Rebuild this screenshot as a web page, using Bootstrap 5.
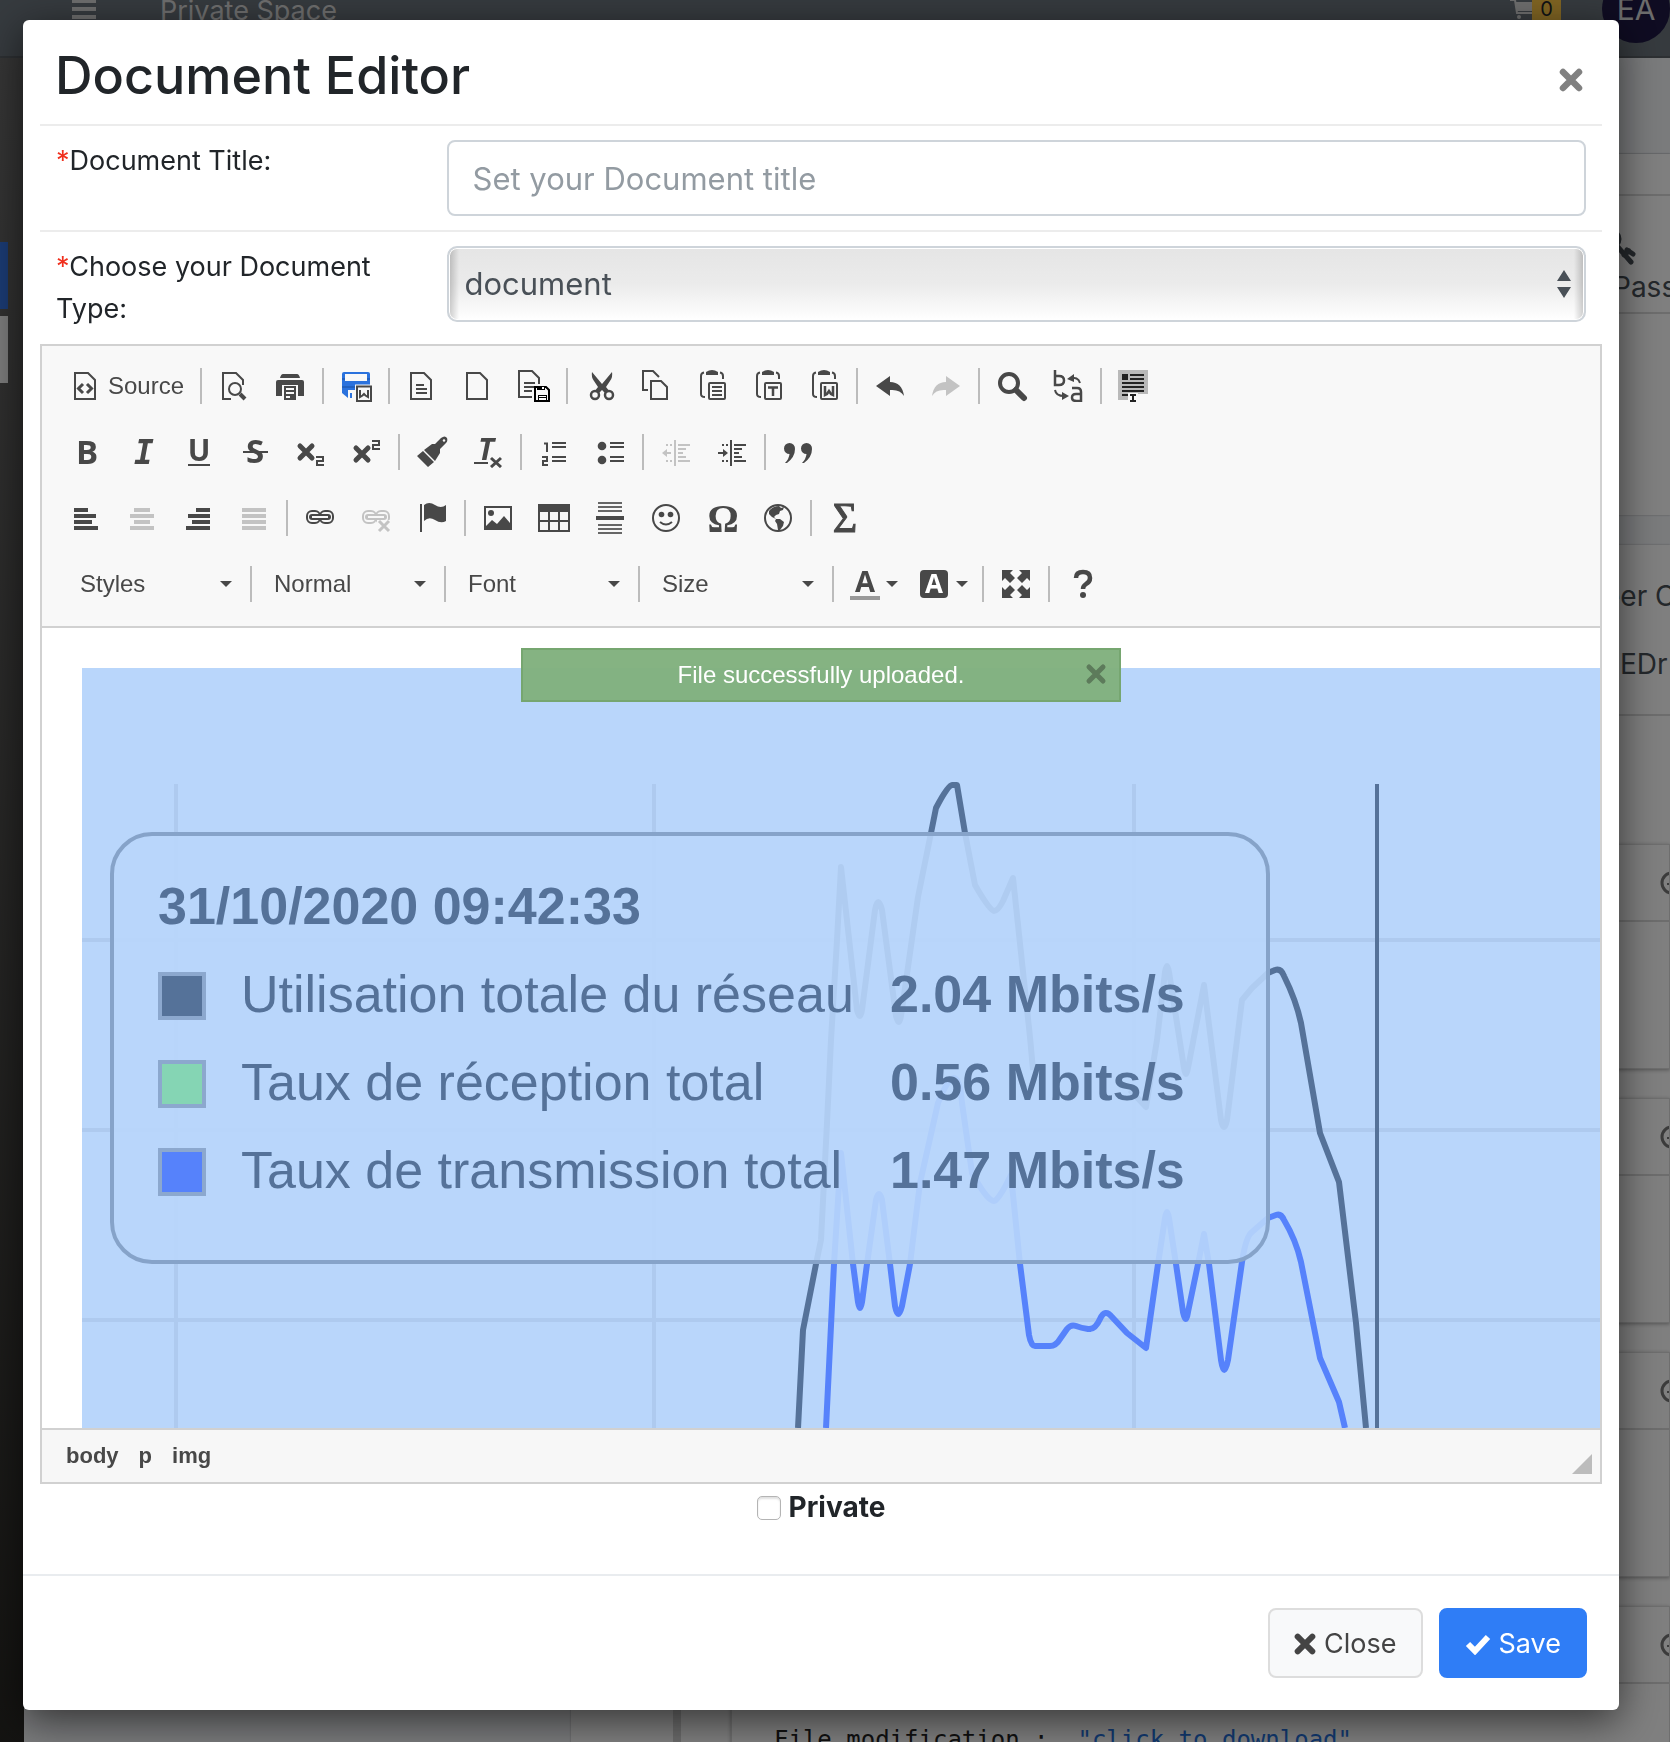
<!DOCTYPE html>
<html lang="en">
<head>
<meta charset="utf-8">
<meta name="viewport" content="width=device-width, initial-scale=1">
<title>Document Editor</title>
<link href="https://cdn.jsdelivr.net/npm/bootstrap@5.3.0/dist/css/bootstrap.min.css" rel="stylesheet">
<script src="https://cdn.jsdelivr.net/npm/bootstrap@5.3.0/dist/js/bootstrap.bundle.min.js"></script>
<style>
  body { font-family: Inter, "Noto Sans", sans-serif; font-size: 27px; line-height: 42px; color: #212529; height: 100vh; overflow: hidden; background: #f4f6f9; }

  /* page behind the dialog */
  .page-behind { height: 100vh; overflow: hidden; }
  .top-nav { height: 96px; margin-top: -38px; background: #6c757d; border-bottom: 2px solid #5a6066; color: #dcdcdc; }
  .top-nav .menu-btn { margin-left: 72px; margin-right: 64px; color: #dcdcdc; }
  .cart-count { background: #ffc845; color: #212529; font-size: 20px; line-height: 30px; width: 29px; height: 30px; }
  .avatar { width: 68px; height: 68px; background: #1e1844; font-size: 30px; margin-left: 41px; color: #d8d8d8; }
  .side-strip { width: 24px; background: linear-gradient(#6c6c6c, #282723); padding-top: 184px; }
  .side-strip i { display: block; width: 8px; height: 67px; margin-bottom: 7px; background: #3677e8; }
  .side-strip i + i { background: #f8f8f8; }
  .page-head { height: 96px; border-bottom: 1px solid #e4e7ea; }
  .bg-panel { background: #fff; box-shadow: 0 0 2px rgba(0,0,0,.3); }
  .panel-a { height: 361px; margin-bottom: 30px; }
  .panel-a .tab-top { height: 42px; border-bottom: 2px solid #dadada; }
  .panel-a .tab-key { height: 118px; border-bottom: 2px solid #dadada; padding-top: 36px; }
  .edge-text { width: 57px; white-space: nowrap; overflow: hidden; color: #495057; font-size: 28px; }
  .panel-b { margin-left: 547px; height: 1204px; }
  .panel-b .panel-head { height: 171px; border-bottom: 2px solid #dadada; padding-top: 30px; }
  .panel-b .panel-head .edge-text { width: 66px; line-height: 42px; margin-bottom: 26px; }
  .panel-b .panel-head .edge-text + .edge-text { width: 50px; }
  .track { width: 8px; margin: 0 50px 0 102px; background: #d6d6d6; }
  .entry { border: 1px solid #dcdcdc; background: #fff; box-shadow: 0 1px 4px rgba(0,0,0,.35); height: 225px; margin-bottom: 29px; }
  .entry-head { height: 77px; border-bottom: 2px solid #dadada; color: #777; }
  .entry-head svg { width: 24px; height: 24px; margin-right: -15px; }
  .entries { padding-top: 128px; }
  .entry-body { font: 24px/36px "DejaVu Sans Mono", monospace; color: #222; padding: 38px 42px 0; white-space: pre; }
  .entry-body a { color: #2472e0; text-decoration: none; }

  /* dialog */
  .modal-dialog.editor-dialog { max-width: none; margin: 20px 51px 32px 23px; }
  .editor-dialog .modal-content { border: 0; border-radius: 6px; box-shadow: 0 10px 40px rgba(0,0,0,.6); }
  .editor-dialog .modal-header { height: 104px; padding: 8px 32px 0; border: 0; }
  .editor-dialog .modal-title { font-size: 52px; line-height: 80px; font-weight: 500; }
  .editor-dialog .modal-body { padding: 0 17px; }
  .editor-dialog .modal-footer { padding: 32px; gap: 16px; border-top: 2px solid #e9ecef; }
  .editor-dialog .modal-footer > * { margin: 0; }
  .plain-btn { border: 0; background: none; padding: 0; color: inherit; display: inline-flex; align-items: center; justify-content: center; }
  .dismiss { color: #808080; }
  .form-line { --bs-gutter-x: 32px; border-top: 2px solid #ececec; padding: 14px 0; margin: 0; }
  .req { color: #f0301e; }
  .field { height: 76px; border: 2px solid #ced4da; border-radius: 8px; font-size: 31px; color: #495057; }
  .form-control.field { padding: 0 24px; }
  .form-control.field::placeholder { color: #939ba2; }
  .form-select.field { padding: 0 60px 0 16px; border-radius: 10px; box-shadow: inset 0 0 0 1px #fff;
    background: url("data:image/svg+xml,%3Csvg xmlns='http://www.w3.org/2000/svg' viewBox='0 0 14 28'%3E%3Cpath d='M7 0l7 11H0zM7 28l7-11H0z' fill='%23495057'/%3E%3C/svg%3E") right 13px center / 14px 28px no-repeat,
      linear-gradient(90deg, #0003, #0000 10px, #0000 calc(100% - 10px), #0003), linear-gradient(#e5e5e5, #ebebeb 50%, #fff); }

  /* rich text editor */
  .rte { border: 2px solid #d1d1d1; font-family: "Liberation Sans", Arial, sans-serif; color: #484848; }
  .rte-tools { background: #f8f8f8; border-bottom: 2px solid #d1d1d1; padding: 7px 16px 9px; }
  .rte-row { min-height: 66px; }
  .tool { width: 56px; height: 48px; }
  .tool svg, .tool-color svg.ico { width: 32px; height: 32px; flex: none; }
  .tool:disabled { color: #c3c3c3; }
  .tool-source { width: 138px; height: 48px; gap: 6px; font-size: 24px; line-height: 32px; }
  .tool-source svg { width: 32px; height: 32px; }
  .tool-color { width: 70px; height: 48px; gap: 4px; padding-left: 2px; }
  .split { width: 2px; height: 36px; margin: 0 4px; background: #bcbcbc; }
  .combo { appearance: none; border: 0; width: 184px; height: 48px; padding: 0 40px 0 18px; font-size: 24px; color: #484848;
    background: url("data:image/svg+xml,%3Csvg xmlns='http://www.w3.org/2000/svg' viewBox='0 0 12 6'%3E%3Cpath d='M0 0h12L6 6z' fill='%23484848'/%3E%3C/svg%3E") right 14px center / 12px 6px no-repeat; }
  .rte-page { height: 800px; padding: 40px 0 0 40px; overflow: hidden; background: #fff; }
  .rte-page > svg { display: block; width: 1600px; height: 760px; max-width: none; }
  .notice { top: 20px; left: 50%; transform: translateX(-50%); width: 600px; height: 54px; background: rgba(129,177,126,.97); border: 2px solid #76a670; color: #fff; font-size: 24px; line-height: 32px; }
  .notice button { right: 12px; top: 13px; color: #5d7b5b; }
  .rte-foot { height: 54px; background: #f7f7f7; border-top: 2px solid #d1d1d1; padding: 0 8px 0 24px; font-size: 22px; line-height: 44px; font-weight: 700; }
  .rte-foot a { color: #484848; text-decoration: none; margin-right: 20px; }

  .private-line { padding: 2px 0 46px; font-size: 28px; font-weight: 700; }
  .private-line .form-check-input { width: 24px; height: 24px; margin: 2px 0 0; border: 1px solid #b4b4b4; border-radius: 5px; box-shadow: inset 0 2px 2px rgba(0,0,0,.12); }
  .act { height: 70px; border-radius: 8px; font-size: 27px; line-height: 42px; padding: 2px 24px 0; border-width: 2px; gap: 8px; }
  .act-close { background: #f8f9fa; border-color: #ddd; color: #444; }
  .act-save { background: #2f7df6; border-color: #2f7df6; color: #fff; }
</style>
</head>
<body>

<svg width="0" height="0" class="position-absolute" aria-hidden="true">
  <defs>
    <symbol id="doc" viewBox="0 0 32 32"><path d="M5 3h13l7 7v19H5z" fill="none" stroke="currentColor" stroke-width="2"/></symbol>
    <symbol id="clip" viewBox="0 0 32 32"><g fill="none" stroke="currentColor" stroke-width="2"><path d="M8 2.500Q5 3 5 6V24Q5 27 9 27M24 2.500Q27 3 27 6V9"/><rect x="13" y="13" width="16" height="16" rx="1"/></g><path d="M10 2Q13 0 16 0T22 2V5H10z" fill="currentColor"/></symbol>
    <symbol id="back" viewBox="0 0 32 32"><path d="M2 16 16 6v6q12 0 14 14-4-7-14-6v6z" fill="currentColor"/></symbol>
    <symbol id="chain" viewBox="0 0 32 32"><g fill="none" stroke="currentColor" stroke-width="2"><rect x="3" y="9" width="13" height="12" rx="5"/><rect x="16" y="9" width="13" height="12" rx="5"/><path d="M8 15h16" stroke-width="6" stroke-linecap="round"/></g><path d="M8 15h16" stroke="#f8f8f8" stroke-width="2"/></symbol>
    <symbol id="clock" viewBox="0 0 24 24"><circle cx="12" cy="12" r="10" fill="none" stroke="currentColor" stroke-width="3"/><path d="M12 6v7H7" fill="none" stroke="currentColor" stroke-width="2"/></symbol>
    <symbol id="times" viewBox="0 0 24 24"><path d="M4 4 20 20M20 4 4 20" stroke="currentColor" stroke-width="6.500" stroke-linecap="round"/></symbol>
    <symbol id="caret" viewBox="0 0 12 6"><path d="M0 0h12L6 6z" fill="currentColor"/></symbol>
  </defs>
</svg>

<div class="page-behind">
  <nav class="top-nav d-flex align-items-center">
    <button class="plain-btn menu-btn" aria-label="Menu"><svg width="24" height="20"><path d="M0 2h24M0 10h24M0 18h24" stroke="currentColor" stroke-width="4"/></svg></button>
    <span class="pt-1">Private Space</span>
    <span class="ms-auto d-flex align-items-center">
      <svg width="22" height="22" viewBox="0 0 22 22"><path d="M0 2h5l2 13h15" fill="none" stroke="currentColor" stroke-width="2"/><path d="M5 4h17v9H7z" fill="currentColor"/><circle cx="9" cy="19" r="2" fill="currentColor"/></svg>
      <span class="cart-count rounded-1 text-center">0</span>
    </span>
    <span class="avatar rounded-circle d-flex align-items-center justify-content-center">EA</span>
  </nav>
  <div class="d-flex">
    <aside class="side-strip"><i></i><i></i></aside>
    <main class="flex-grow-1">
      <div class="page-head"></div>
      <section class="bg-panel panel-a">
        <div class="tab-top"></div>
        <div class="tab-key">
          <div class="edge-text ms-auto">
            <svg class="d-block" width="30" height="34" viewBox="1613 231 30 34"><g fill="none" stroke="currentColor" stroke-width="5" stroke-linecap="round"><circle cx="1611" cy="238" r="8"/><path d="M1617 245 1631 261M1627 249l6 4M1624 254l5-4"/></g></svg>
            Pass
          </div>
        </div>
      </section>
      <section class="bg-panel panel-b">
        <div class="panel-head"><div class="edge-text ms-auto">eer C</div><div class="edge-text ms-auto">EDr</div></div>
        <div class="d-flex">
          <div class="track"></div>
          <div class="entries flex-grow-1">
            <div class="entry"><div class="entry-head d-flex justify-content-end align-items-center overflow-hidden"><svg><use href="#clock"/></svg></div></div>
            <div class="entry"><div class="entry-head d-flex justify-content-end align-items-center overflow-hidden"><svg><use href="#clock"/></svg></div></div>
            <div class="entry"><div class="entry-head d-flex justify-content-end align-items-center overflow-hidden"><svg><use href="#clock"/></svg></div></div>
            <div class="entry"><div class="entry-head d-flex justify-content-end align-items-center overflow-hidden"><svg><use href="#clock"/></svg></div><div class="entry-body">File modification :  <a href="#">"click to download"</a></div></div>
          </div>
        </div>
      </section>
    </main>
  </div>
</div>

<div class="modal-backdrop show"></div>
<div class="modal d-block" role="dialog" aria-labelledby="dlg-title">
  <div class="modal-dialog editor-dialog">
    <div class="modal-content">
      <div class="modal-header d-flex justify-content-between align-items-center">
        <h1 class="modal-title" id="dlg-title">Document Editor</h1>
        <button class="plain-btn dismiss mt-2" aria-label="Close dialog"><svg width="32" height="32" viewBox="-4 -4 32 32"><use href="#times" width="24" height="24"/></svg></button>
      </div>

      <div class="modal-body">
        <div class="row form-line">
          <label class="col-3" for="doc-title"><span class="req">*</span>Document Title:</label>
          <div class="col-9"><input id="doc-title" class="form-control field" type="text" placeholder="Set your Document title"></div>
        </div>
        <div class="row form-line">
          <label class="col-3" for="doc-type"><span class="req">*</span>Choose your Document Type:</label>
          <div class="col-9"><select id="doc-type" class="form-select field"><option>document</option></select></div>
        </div>

        <div class="rte">
          <div class="rte-tools">
            <div class="rte-row d-flex flex-wrap align-items-center">
              <button class="plain-btn tool-source"><svg viewBox="0 0 32 32"><use href="#doc"/><path d="M13 14l-4.500 4.500L13 23M17 14l4.500 4.500L17 23" fill="none" stroke="currentColor" stroke-width="3"/></svg>Source</button>
              <span class="split"></span>
              <button class="plain-btn tool" aria-label="Preview"><svg viewBox="0 0 32 32" fill="none" stroke="currentColor"><path d="M13 29H5V3h13l7 7v5" stroke-width="2"/><circle cx="17" cy="19" r="6" stroke-width="2"/><path d="m22 24 5 5" stroke-width="4"/></svg></button>
              <button class="plain-btn tool" aria-label="Print"><svg viewBox="0 0 32 32"><path d="M6 8q1-4 3-4h14q2 0 3 4zM4 10h24q2 0 2 2v14h-6V15H8v11H2V12q0-2 2-2zM10 16h12v14H10z" fill="currentColor"/><path d="M12 19h8M12 23h8M12 27h4" stroke="#f8f8f8" stroke-width="2"/></svg></button>
              <span class="split"></span>
              <button class="plain-btn tool" aria-label="Export to Word"><svg viewBox="0 0 32 32"><path d="M4 2h24q2 0 2 2v24H8l-6-5V4q0-2 2-2z" fill="#2b72dd"/><path d="M5 4h22v7H5zM8 20h7v8h-3v-5h-2v5H8z" fill="#f8f8f8"/><path d="M2 9h3M27 9h3M2 17h28" stroke="#1b4f9f"/><rect x="15" y="14.500" width="17" height="17.500" fill="#f8f8f8"/><path d="M17 16.500h14V31H17zM20 20v7l2.500-1.500L24 24l1.500 1.500L28 27v-7" fill="none" stroke="currentColor" stroke-width="2"/></svg></button>
              <span class="split"></span>
              <button class="plain-btn tool" aria-label="Templates"><svg viewBox="0 0 32 32"><use href="#doc"/><path d="M10 15h8M10 19h11M10 23h11" stroke="currentColor" stroke-width="2"/></svg></button>
              <button class="plain-btn tool" aria-label="New page"><svg viewBox="0 0 32 32"><use href="#doc"/></svg></button>
              <button class="plain-btn tool" aria-label="Save document"><svg viewBox="0 0 32 32"><path d="M14 27H1V1h13l7 7v6M6 13h11M6 17h10M6 21h8" fill="none" stroke="currentColor" stroke-width="2"/><path d="M17 17h11l3 3v11H17z" fill="#f8f8f8" stroke="#000" stroke-width="2"/><path d="M19 16h8v4h-8zM20 25h9v6h-9z"/><path d="M24 17h2v2h-2zM21 26h7v1h-7zM21 28h7v2h-7z" fill="#fff"/></svg></button>
              <span class="split"></span>
              <button class="plain-btn tool" aria-label="Cut"><svg viewBox="0 0 32 32"><path d="M8 2q-1 5 2 9l4 6-4 5 3 3 5-5 5 5 3-3-4-5 4-6q3-4 2-9l-10 12z" fill="currentColor"/><g fill="#f8f8f8" stroke="currentColor" stroke-width="2.500"><circle cx="11" cy="25" r="4"/><circle cx="25" cy="25" r="4"/></g></svg></button>
              <button class="plain-btn tool" aria-label="Copy"><svg viewBox="0 0 32 32" fill="none" stroke="currentColor" stroke-width="2"><path d="M8 20H3V1h10l6 6M11 11h10l6 6v12H11z"/></svg></button>
              <button class="plain-btn tool" aria-label="Paste"><svg viewBox="0 0 32 32"><use href="#clip"/><path d="M16 17h10M16 21h10M16 25h10" stroke="currentColor" stroke-width="2"/></svg></button>
              <button class="plain-btn tool" aria-label="Paste as plain text"><svg viewBox="0 0 32 32"><use href="#clip"/><path d="M16 17.500h10M21 17v9" stroke="currentColor" stroke-width="2.500"/></svg></button>
              <button class="plain-btn tool" aria-label="Paste from Word"><svg viewBox="0 0 32 32"><use href="#clip"/><path d="M17 16v9l2-1 2-3 2 3 2 1v-9" fill="none" stroke="currentColor" stroke-width="2.500"/></svg></button>
              <span class="split"></span>
              <button class="plain-btn tool" aria-label="Undo"><svg><use href="#back"/></svg></button>
              <button class="plain-btn tool" aria-label="Redo" disabled><svg viewBox="0 0 32 32"><g transform="matrix(-1 0 0 1 32 0)"><use href="#back" width="32" height="32"/></g></svg></button>
              <span class="split"></span>
              <button class="plain-btn tool" aria-label="Find"><svg viewBox="0 0 32 32" fill="none" stroke="currentColor"><circle cx="13" cy="13" r="9" stroke-width="4"/><path d="m20 20 8 8" stroke-width="6" stroke-linecap="round"/></svg></button>
              <button class="plain-btn tool" aria-label="Replace"><svg viewBox="0 0 32 32" fill="none" stroke="currentColor"><path d="M3 0v15h4q5 0 5-4.500T7 6H3M20 18h5q4 0 4 4v9h-4.500q-4.500 0-4.500-3.500T24 24h5" stroke-width="2.500"/><path d="M18 9q8-3 10 4M3 20q1 6 9 6" stroke-width="2"/><path d="m15 9 7-5v8zM17 26l-7-4v8z" fill="currentColor" stroke="none"/></svg></button>
              <span class="split"></span>
              <button class="plain-btn tool" aria-label="Select all"><svg viewBox="0 0 32 32"><path d="M0 0h30v24H20v-1h-9v7H0z" fill="#b9b9b9"/><path d="M4 4h6v6H4z" fill="#222"/><path d="M12 5h14M12 9h14M4 13h22M4 17h22M4 21h22M4 25h6" stroke="#222" stroke-width="2"/><path d="M10 23h10v9H10z" fill="#f8f8f8"/><path d="M12 25h6M12 31h6M15 25v6" stroke="#222" stroke-width="2"/></svg></button>
            </div>

            <div class="rte-row d-flex flex-wrap align-items-center">
              <button class="plain-btn tool" aria-label="Bold"><svg viewBox="0 0 32 32" fill="currentColor"><text x="17" y="28" text-anchor="middle" font-family="Open Sans" font-weight="700" font-size="33">B</text></svg></button>
              <button class="plain-btn tool" aria-label="Italic"><svg viewBox="0 0 32 32" fill="currentColor"><text x="18" y="28" text-anchor="middle" font-family="DejaVu Sans Mono" font-style="italic" font-weight="700" font-size="33">I</text></svg></button>
              <button class="plain-btn tool" aria-label="Underline"><svg viewBox="0 0 32 32" fill="currentColor"><text x="17" y="25" text-anchor="middle" font-family="Open Sans" font-weight="700" font-size="30">U</text><path d="M6 28h22v2H6z"/></svg></button>
              <button class="plain-btn tool" aria-label="Strikethrough"><svg viewBox="0 0 32 32" fill="currentColor"><text x="17" y="27" text-anchor="middle" font-family="Open Sans" font-weight="700" font-size="33">S</text><path d="M5 15h25v2H5z"/></svg></button>
              <button class="plain-btn tool" aria-label="Subscript"><svg viewBox="0 0 32 32" fill="currentColor"><path d="m6 10 12 12M18 10 6 22" stroke="currentColor" stroke-width="5" stroke-linecap="round"/><path d="M22 21h7v4h-6v4h7" fill="none" stroke="currentColor" stroke-width="2"/></svg></button>
              <button class="plain-btn tool" aria-label="Superscript"><svg viewBox="0 0 32 32"><path d="m6 12 12 12M18 12 6 24" stroke="currentColor" stroke-width="5" stroke-linecap="round"/><path d="M22 5h7v4h-6v4h7" fill="none" stroke="currentColor" stroke-width="2"/></svg></button>
              <span class="split"></span>
              <button class="plain-btn tool" aria-label="Copy formatting"><svg viewBox="0 0 32 32"><path d="m1 20 6-5 11 11-6 5zM8 14l8-6h3l6-6q4-3 6 0 1 3-1 5l-6 6v4l-5 8z" fill="currentColor"/><circle cx="28" cy="4.500" r="1.200" fill="#f8f8f8"/></svg></button>
              <button class="plain-btn tool" aria-label="Remove format"><svg viewBox="0 0 32 32"><text x="14" y="24" text-anchor="middle" font-family="Open Sans" font-style="italic" font-weight="700" font-size="30" fill="currentColor">T</text><path d="M2 27h14" stroke="currentColor" stroke-width="2"/><path d="m19 22 10 9M29 22l-10 9" stroke="currentColor" stroke-width="3"/></svg></button>
              <span class="split"></span>
              <button class="plain-btn tool" aria-label="Numbered list"><svg viewBox="0 0 32 32" fill="none" stroke="currentColor" stroke-width="2"><path d="M14 7h14M14 11h14M14 21h14M14 25h14M6 7.500h3V16M4 21h5v4H5v4h5"/></svg></button>
              <button class="plain-btn tool" aria-label="Bulleted list"><svg viewBox="0 0 32 32"><path d="M16 7h14M16 11h14M16 21h14M16 25h14" stroke="currentColor" stroke-width="2"/><g fill="currentColor"><circle cx="8" cy="10" r="4.300"/><circle cx="8" cy="24" r="4.300"/></g></svg></button>
              <span class="split"></span>
              <button class="plain-btn tool" aria-label="Decrease indent" disabled><svg viewBox="0 0 32 32"><path d="M15 4v26M18 9h12M18 13h8M18 17h5M18 21h8M18 25h12M4 17h7M6 9h2M10 9h2M6 25h2M10 25h2" stroke="currentColor" stroke-width="2"/><path d="m2 17 5-4v8z" fill="currentColor"/></svg></button>
              <button class="plain-btn tool" aria-label="Increase indent"><svg viewBox="0 0 32 32"><path d="M15 4v26M18 9h12M18 13h8M18 17h5M18 21h8M18 25h12M2 17h7M6 9h2M10 9h2M6 25h2M10 25h2" stroke="currentColor" stroke-width="2"/><path d="m12 17-5-4v8z" fill="currentColor"/></svg></button>
              <span class="split"></span>
              <button class="plain-btn tool" aria-label="Block quote"><svg viewBox="0 0 32 32" fill="currentColor"><path d="M7.500 7a5.500 5.500 0 0 1 5.500 6q0 8-8 14H3q4-4 4.500-9a5.500 5.500 0 0 1 0-11zM24.500 7a5.500 5.500 0 0 1 5.500 6q0 8-8 14h-2q4-4 4.500-9a5.500 5.500 0 0 1 0-11z"/></svg></button>
            </div>

            <div class="rte-row d-flex flex-wrap align-items-center">
              <button class="plain-btn tool" aria-label="Align left"><svg viewBox="0 0 32 32"><path d="M4 8h14M4 14h22M4 20h18M4 26h24" stroke="currentColor" stroke-width="4"/></svg></button>
              <button class="plain-btn tool" aria-label="Center" disabled><svg viewBox="0 0 32 32"><path d="M8 8h16M4 14h24M8 20h16M4 26h24" stroke="currentColor" stroke-width="4"/></svg></button>
              <button class="plain-btn tool" aria-label="Align right"><svg viewBox="0 0 32 32"><path d="M14 8h14M6 14h22M10 20h18M4 26h24" stroke="currentColor" stroke-width="4"/></svg></button>
              <button class="plain-btn tool" aria-label="Justify" disabled><svg viewBox="0 0 32 32"><path d="M4 8h24M4 14h24M4 20h24M4 26h24" stroke="currentColor" stroke-width="4"/></svg></button>
              <span class="split"></span>
              <button class="plain-btn tool" aria-label="Link"><svg><use href="#chain"/></svg></button>
              <button class="plain-btn tool" aria-label="Unlink" disabled><svg viewBox="0 0 32 32"><use href="#chain"/><path d="M17 18h15v13H17z" fill="#f8f8f8"/><path d="m19 19 10 10M29 19 19 29" stroke="currentColor" stroke-width="3"/></svg></button>
              <button class="plain-btn tool" aria-label="Anchor"><svg viewBox="0 0 32 32"><path d="M5 2v28" stroke="currentColor" stroke-width="2"/><path d="M8 3q5-4 11 0t11 0v16q-5 3-11-1t-11 1z" fill="currentColor"/></svg></button>
              <span class="split"></span>
              <button class="plain-btn tool" aria-label="Image"><svg viewBox="0 0 32 32"><path d="M3 5h26v22H3z" fill="none" stroke="currentColor" stroke-width="2"/><circle cx="9" cy="11" r="3" fill="currentColor"/><path d="M4 27v-3l6-6 5 4 7-8 6 7v6z" fill="currentColor"/></svg></button>
              <button class="plain-btn tool" aria-label="Table"><svg viewBox="0 0 32 32"><path d="M0 2h32v8H0z" fill="currentColor"/><path d="M1 9v20h30V9M1 19h30M11 9v20M21 9v20" fill="none" stroke="currentColor" stroke-width="2"/></svg></button>
              <button class="plain-btn tool" aria-label="Horizontal line"><svg viewBox="0 0 32 32"><path d="M4 1h24M4 5h24M4 9h24M4 23h24M4 27h24M4 31h24" stroke="#666" stroke-width="2"/><path d="M2 16h28" stroke="currentColor" stroke-width="4"/></svg></button>
              <button class="plain-btn tool" aria-label="Smiley"><svg viewBox="0 0 32 32"><circle cx="16" cy="16" r="13" fill="none" stroke="currentColor" stroke-width="2"/><circle cx="11.500" cy="12.500" r="2.800" fill="currentColor"/><circle cx="20.500" cy="12.500" r="2.800" fill="currentColor"/><path d="M10 20q6 5 12 0" fill="none" stroke="currentColor" stroke-width="2"/></svg></button>
              <button class="plain-btn tool" aria-label="Special character"><svg viewBox="0 0 32 32"><text x="17" y="30" text-anchor="middle" font-family="Liberation Serif" font-weight="700" font-size="39" fill="currentColor">Ω</text></svg></button>
              <button class="plain-btn tool" aria-label="IFrame"><svg viewBox="0 0 32 32"><circle cx="16" cy="16" r="13" fill="none" stroke="currentColor" stroke-width="2"/><path d="M7 9q4-5 10-5l2 2 3-1-1 3-3 1-1 3-3 1-2 2 2 2-4-2-3-3zM14 17l4 0 4 3-1 4-3 4-2 0-1-6-2-3z" fill="currentColor"/></svg></button>
              <span class="split"></span>
              <button class="plain-btn tool" aria-label="Mathematics"><svg viewBox="0 0 32 32"><text x="17" y="30" text-anchor="middle" font-family="Liberation Serif" font-size="42" stroke="currentColor" fill="currentColor">Σ</text></svg></button>
            </div>

            <div class="rte-row d-flex flex-wrap align-items-center ps-1">
              <select class="combo" aria-label="Styles"><option>Styles</option></select>
              <span class="split"></span>
              <select class="combo" aria-label="Format"><option>Normal</option></select>
              <span class="split"></span>
              <select class="combo" aria-label="Font"><option>Font</option></select>
              <span class="split"></span>
              <select class="combo" aria-label="Size"><option>Size</option></select>
              <span class="split"></span>
              <button class="plain-btn tool-color" aria-label="Text color"><svg class="ico" viewBox="0 0 32 32"><text x="15" y="24" text-anchor="middle" font-family="Open Sans" font-weight="700" font-size="29" fill="currentColor">A</text><path d="M0 28h30v4H0z" fill="#999"/></svg><svg width="12" height="6"><use href="#caret"/></svg></button>
              <button class="plain-btn tool-color" aria-label="Background color"><svg class="ico" viewBox="0 0 32 32"><rect y="2" width="28" height="28" rx="4" fill="currentColor"/><text x="14" y="25" text-anchor="middle" font-family="Open Sans" font-weight="700" font-size="26" fill="#fff">A</text></svg><svg width="12" height="6"><use href="#caret"/></svg></button>
              <span class="split"></span>
              <button class="plain-btn tool" aria-label="Maximize"><svg viewBox="0 0 32 32"><path d="M2 2h11l-3 3 5 5-5 5-5-5-3 3zM30 2H19l3 3-5 5 5 5 5-5 3 3zM2 30h11l-3-3 5-5-5-5-5 5-3-3zM30 30H19l3-3-5-5 5-5 5 5 3-3z" fill="currentColor"/></svg></button>
              <span class="split"></span>
              <button class="plain-btn tool" aria-label="Help"><svg viewBox="0 0 32 32" fill="none" stroke="currentColor"><path d="M10 10q0-6 7-6t7 6q0 4-4 6-3 2-3 5" stroke-width="4.500"/><circle cx="17" cy="27" r="3" fill="currentColor" stroke="none"/></svg></button>
            </div>
          </div>

          <div class="rte-page position-relative">
            <svg viewBox="82 668 1600 760" font-family="Liberation Sans, Arial, sans-serif" font-size="52" fill="#557299">
              <rect x="82" y="668" width="1600" height="760" fill="#b9d6fb"/>
              <path d="M176 784v644M654 784v644M1134 784v644M82 940h1600M82 1130h1600M82 1320h1600" stroke="#aecaef" stroke-width="4"/>
              <g fill="none" stroke-width="6" stroke-linejoin="round">
                <path stroke="#5682fb" d="M826 1428 834 1264 841 1153 853 1264 858 1302Q860 1314 862 1302L867 1264 876 1200Q879 1188 882 1200L890 1264 895 1306Q898 1322 902 1306L910 1264 920 1183 938 1103Q948 1078 954 1078T962 1103L972 1173Q990 1206 996 1200T1011 1175L1020 1264 1029 1335Q1031 1346 1035 1346H1050Q1056 1346 1060 1339L1067 1329Q1071 1324 1076 1326T1088 1329 1100 1319 1112 1317L1127 1333 1146 1348 1158 1264 1165 1218Q1167 1206 1169 1218L1176 1264 1183 1312Q1186 1326 1188 1312L1198 1264 1204 1234 1209 1264 1221 1360Q1224 1380 1228 1360L1242 1262Q1246 1236 1252 1232L1268 1218 1276 1215Q1281 1213 1284 1220 1296 1240 1301 1262L1320 1358 1339 1402 1345 1428"/>
                <path stroke="#557299" d="M798 1428 803 1330 816 1264 821 1240 827 1123 831 1040 837 940 841 867 857 1010Q860 1022 862 1010L875 910Q878 894 882 910L896 1016Q899 1028 901 1016L918 897 931 833 936 808Q948 785 952 785H957L965 833 975 885Q990 911 994 911T1003 901L1013 878 1030 1037 1033 1070M1130 1090 1146 1107 1157 1040 1165 972Q1167 960 1169 972L1184 1068Q1186 1080 1188 1068L1204 985 1221 1120Q1224 1134 1227 1120L1242 1000 1252 988 1268 973 1275 970Q1281 968 1284 976 1296 1000 1301 1023L1320 1133 1339 1182 1356 1323 1366 1428"/>
              </g>
              <path d="M1377 784v644" stroke="#557299" stroke-width="4"/>
              <rect x="112" y="834" width="1156" height="428" rx="40" fill="#b9d6fb" fill-opacity=".9" stroke="#86a3c9" stroke-width="4"/>
              <g stroke="#8ca8ce" stroke-width="4">
                <rect x="160" y="974" width="44" height="44"/>
                <rect x="160" y="1062" width="44" height="44" fill="#85d5b4"/>
                <rect x="160" y="1150" width="44" height="44" fill="#5682fb"/>
              </g>
              <text x="158" y="924" font-weight="700">31/10/2020 09:42:33</text>
              <text x="241" y="1012">Utilisation totale du réseau</text>
              <text x="241" y="1100">Taux de réception total</text>
              <text x="241" y="1188">Taux de transmission total</text>
              <g font-weight="700">
                <text x="890" y="1012">2.04 Mbits/s</text>
                <text x="890" y="1100">0.56 Mbits/s</text>
                <text x="890" y="1188">1.47 Mbits/s</text>
              </g>
            </svg>
            <div class="notice position-absolute d-flex align-items-center justify-content-center" role="status">
              File successfully uploaded.
              <button class="plain-btn position-absolute" aria-label="Dismiss"><svg width="22" height="22" viewBox="0 0 22 22"><path d="M4 4 18 18M18 4 4 18" stroke="currentColor" stroke-width="5" stroke-linecap="round"/></svg></button>
            </div>
          </div>

          <div class="rte-foot d-flex align-items-center">
            <a href="#">body</a><a href="#">p</a><a href="#">img</a>
            <svg class="ms-auto align-self-end mb-2" width="20" height="20"><path d="M20 0v20H0z" fill="#bcbcbc"/></svg>
          </div>
        </div>

        <div class="private-line d-flex justify-content-center">
          <span class="form-check d-flex align-items-center gap-2 p-0 m-0">
            <input class="form-check-input float-none" type="checkbox" id="private"><label for="private">Private</label>
          </span>
        </div>
      </div>

      <div class="modal-footer">
        <button class="btn act act-close d-flex align-items-center"><svg width="22" height="22" viewBox="0 0 24 24"><use href="#times"/></svg>Close</button>
        <button class="btn act act-save d-flex align-items-center"><svg width="26" height="22" viewBox="0 0 26 22"><path d="m3 11 7 7L23 4" fill="none" stroke="currentColor" stroke-width="6"/></svg>Save</button>
      </div>
    </div>
  </div>
</div>
</body>
</html>
